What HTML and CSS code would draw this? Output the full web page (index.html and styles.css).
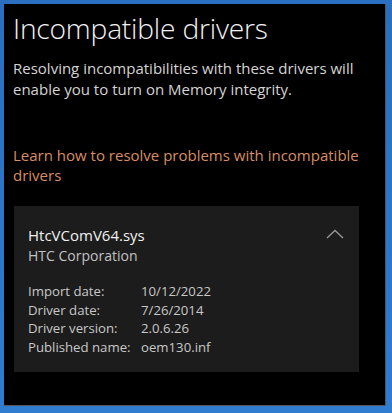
FILE: index.html
```html
<!DOCTYPE html>
<html>
<head>
  <meta name="viewport" content="width=device-width, initial-scale=1.0">
  <title>Incompatible drivers</title>
  <link rel="stylesheet" href="styles.css">
</head>
<body>
  <div class="panel">
    <h1>Incompatible drivers</h1>
    <p class="intro">Resolving incompatibilities with these drivers will enable you to turn on Memory integrity.</p>
    <a class="learn" href="#">Learn how to resolve problems with incompatible drivers</a>

    <div class="card">
      <div class="card-head">
        <div>
          <div class="driver-name">HtcVComV64.sys</div>
          <div class="driver-vendor">HTC Corporation</div>
        </div>
        <svg class="chevron" width="18" height="10" viewBox="0 0 18 10">
          <polyline points="1,9 9,1.5 17,9" fill="none" stroke="#9a9a9a" stroke-width="1.3"/>
        </svg>
      </div>
      <div class="details">
        <span>Import date:</span><span>10/12/2022</span>
        <span>Driver date:</span><span>7/26/2014</span>
        <span>Driver version:</span><span>2.0.6.26</span>
        <span>Published name:</span><span>oem130.inf</span>
      </div>
    </div>
  </div>
</body>
</html>
```

FILE: styles.css
```css
body {
  margin: 0;
  width: 392px;
  height: 413px;
  background: linear-gradient(180deg, #2a6fc0 0%, #2f7cd0 100%);
  font-family: 'Open Sans', 'Noto Sans', sans-serif;
  padding: 4px 4px 0 4px;
  box-sizing: border-box;
}
.panel {
  background-color: #000;
  width: 382px;
  height: 402px;
  box-sizing: border-box;
  padding: 0 0 0 9px;
  border-right: 1px solid #555;
  border-bottom: 1px solid #555;
}
h1 {
  margin: 0;
  padding-top: 4px;
  font-size: 28.2px;
  font-weight: 300;
  color: #f2f2f2;
  line-height: 40px;
  letter-spacing: -0.2px;
}
.intro {
  margin: 10px 0 0 0;
  font-size: 15px;
  line-height: 21px;
  color: #d4d4d4;
  width: 370px;
}
.learn {
  display: block;
  margin-top: 45px;
  font-size: 15px;
  line-height: 20px;
  color: #d88e62;
  text-decoration: none;
  width: 356px;
}
.card {
  margin-top: 21px;
  margin-left: 1px;
  width: 345px;
  height: 166px;
  box-sizing: border-box;
  background-color: #1c1c1c;
  padding: 19px 14px 0 14px;
}
.card-head {
  display: flex;
  justify-content: space-between;
  align-items: flex-start;
}
.driver-name {
  font-size: 15px;
  line-height: 21px;
  color: #f0f0f0;
}
.driver-vendor {
  font-size: 14px;
  line-height: 19px;
  color: #c2c2c2;
}
.chevron {
  margin-top: 4px;
  margin-right: 1px;
}
.details {
  margin-top: 17px;
  display: grid;
  grid-template-columns: 113px auto;
  font-size: 13.2px;
  line-height: 18.7px;
  color: #c8c8c8;
}
```
